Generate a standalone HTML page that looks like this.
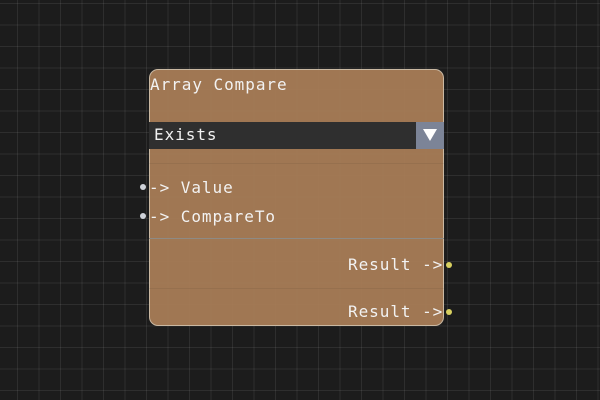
<!DOCTYPE html>
<html><head><style>
body{margin:0;width:600px;height:400px;overflow:hidden;background:#1c1c1c;
background-image:linear-gradient(90deg,rgba(255,255,255,0.08) 1px,transparent 1px),linear-gradient(rgba(255,255,255,0.08) 1px,transparent 1px);
background-size:21.5px 21.5px;background-position:17px 3px;position:relative;font-family:"DejaVu Sans Mono","Liberation Mono",monospace;}
.node{position:absolute;left:149px;top:69px;width:293px;height:255px;background:rgba(168,124,86,0.95);border:1px solid #c9b8a2;border-radius:9px;}
.t{position:absolute;color:#f2f2f2;font-size:16px;letter-spacing:0.95px;line-height:18px;white-space:nowrap;}
.dot{position:absolute;width:6px;height:6px;border-radius:50%;}
</style></head><body>
<div class="node"></div>
<div class="t" style="left:150px;top:76px">Array Compare</div>
<div style="position:absolute;left:149px;top:122px;width:267px;height:27px;background:#2f2f2f"></div>
<div style="position:absolute;left:416px;top:122px;width:28px;height:27px;background:#7c8497"></div>
<div style="position:absolute;left:423px;top:129px;width:0;height:0;border-left:7px solid transparent;border-right:7px solid transparent;border-top:12px solid #fff"></div>
<div class="t" style="left:154px;top:126px">Exists</div>
<div style="position:absolute;left:149px;top:163px;width:295px;height:1px;background:rgba(0,0,0,0.06)"></div>
<div style="position:absolute;left:149px;top:238px;width:295px;height:1px;background:#8e8a84"></div>
<div style="position:absolute;left:149px;top:288px;width:295px;height:1px;background:rgba(0,0,0,0.06)"></div>
<div class="dot" style="left:140px;top:184px;background:#cfd2d8"></div>
<div class="dot" style="left:140px;top:213px;background:#cfd2d8"></div>
<div class="t" style="left:149px;top:179px">-&gt; Value</div>
<div class="t" style="left:149px;top:208px">-&gt; CompareTo</div>
<div class="t" style="left:348px;top:256px">Result -&gt;</div>
<div class="t" style="left:348px;top:303px">Result -&gt;</div>
<div class="dot" style="left:446px;top:262px;background:#d8d060"></div>
<div class="dot" style="left:446px;top:309px;background:#d8d060"></div>
</body></html>
